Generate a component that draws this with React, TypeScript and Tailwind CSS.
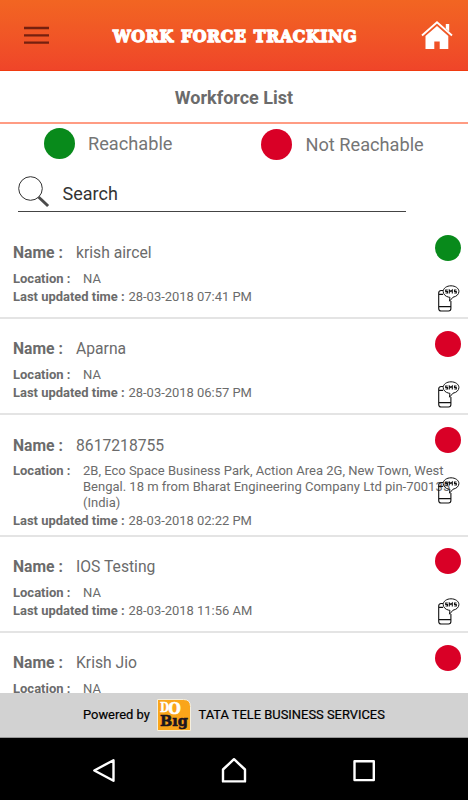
import React from 'react';

interface Worker {
    name: string;
    location: string[];
    updated: string;
    reachable: boolean;
}

const workers: Worker[] = [
    { name: 'krish aircel', location: ['NA'], updated: '28-03-2018 07:41 PM', reachable: true },
    { name: 'Aparna', location: ['NA'], updated: '28-03-2018 06:57 PM', reachable: false },
    {
        name: '8617218755',
        location: [
            '2B, Eco Space Business Park, Action Area 2G, New Town, West',
            'Bengal. 18 m from Bharat Engineering Company Ltd pin-700135',
            '(India)',
        ],
        updated: '28-03-2018 02:22 PM',
        reachable: false,
    },
    { name: 'IOS Testing', location: ['NA'], updated: '28-03-2018 11:56 AM', reachable: false },
    { name: 'Krish Jio', location: ['NA'], updated: '', reachable: false },
];

const MenuIcon: React.FC = () => (
    <svg width="25" height="19" viewBox="0 0 25 19" stroke="#75200f" strokeWidth="2.3">
        <path d="M0 2h25M0 9.3h25M0 16.6h25" />
    </svg>
);

const HomeIcon: React.FC = () => (
    <svg width="32" height="30" viewBox="0 0 32 30" fill="none">
        <path d="M1 15.5 16 2.2 31 15.5" stroke="#fff" strokeWidth="1.9" />
        <path d="M24.8 4h3.4v7.5l-3.4-3z" fill="#fff" />
        <path d="M16 6 27.3 16v13h-8.6v-7.5h-5.4V29H4.5V16z" fill="#fff" />
    </svg>
);

const SearchIcon: React.FC = () => (
    <svg width="32" height="32" viewBox="0 0 32 32" fill="none">
        <circle cx="12.5" cy="12.5" r="11.8" stroke="#333" strokeWidth="1" />
        <path d="m20.5 21 9.6 9" stroke="#4a4a4a" strokeWidth="3" />
    </svg>
);

const SmsIcon: React.FC = () => (
    <svg width="22" height="27" viewBox="0 0 22 27" fill="none" stroke="#111">
        <path d="M5 5.5H3.2Q.7 5.7.7 8v15.2Q.7 26 3.2 26h7.3q2.4 0 2.4-2.5V16" strokeWidth="1.1" />
        <path d="M1 9.4h4M1 21.6h12" strokeWidth="1.1" />
        <path
            d="M10.8 12.2C7.5 11.5 5.2 9.3 5.2 6.5 5.2 3.2 8.7.8 13 .8s7.9 2.4 7.9 5.7c0 2.9-2.5 5.1-5.9 5.7l-3.5 4 .4-3.9z"
            strokeWidth="1"
        />
        <path
            d="M9.7 5H7.7v1.5h1.8V8H7.5M11.3 8.4V5l1.5 1.4L14.3 5v3.4M18.5 5h-2v1.5h1.8V8h-2"
            strokeWidth="1.1"
        />
    </svg>
);

const DoBigLogo: React.FC = () => (
    <svg width="34" height="32" viewBox="0 0 34 32">
        <path d="M.5.5h26q7 0 7 7v24H.5z" fill="#faa51a" stroke="#f5efdf" />
        <text x="3" y="12.5" fontFamily="DejaVu Serif" fontWeight="bold" fontSize="12.5" fill="#fff" stroke="#fff" strokeWidth=".4" textLength="9" lengthAdjust="spacingAndGlyphs">D</text>
        <text x="11.3" y="15.3" fontFamily="DejaVu Serif" fontWeight="bold" fontSize="16" fill="#fff" stroke="#fff" strokeWidth=".7" textLength="12.5" lengthAdjust="spacingAndGlyphs">O</text>
        <text x="3" y="26.5" fontFamily="DejaVu Serif" fontWeight="bold" fontSize="15.5" fill="#1b1520" stroke="#1b1520" strokeWidth=".6" textLength="28" lengthAdjust="spacingAndGlyphs">Bıg</text>
    </svg>
);

const WorkerRow: React.FC<{ worker: Worker }> = ({ worker }) => (
    <li className="relative min-h-[96.2px] border-b-2 border-[#e4e4e4] pt-[18px] pb-[6.2px] pl-[13px] text-[#6b6b6b]">
        <div className="flex h-6 items-center text-[15.7px] whitespace-nowrap">
            <span className="w-[63px] font-bold">Name :</span>
            <span>{worker.name}</span>
        </div>
        <div className="flex pt-[6px] text-[13px] leading-[15.6px] whitespace-nowrap">
            <span className="w-[70px] shrink-0 font-bold">Location :</span>
            <div>
                {worker.location.map((line) => (
                    <div key={line}>{line}</div>
                ))}
            </div>
        </div>
        {worker.updated && (
            <div className="flex h-[18.4px] items-end pt-[2px] text-[12.95px] leading-[16px] whitespace-nowrap">
                <span className="w-[115.5px] font-bold">Last updated time :</span>
                <span>{worker.updated}</span>
            </div>
        )}
        <span
            className={`absolute top-[11.7px] right-[7px] h-[26px] w-[26px] rounded-full ${
                worker.reachable ? 'bg-[#088a1b]' : 'bg-[#d90026]'
            }`}
        />
        <span className="absolute top-[61.7px] right-[8px]">
            <SmsIcon />
        </span>
    </li>
);

const App: React.FC = () => {
    return (
        <div className="flex h-[800px] w-[468px] flex-col overflow-hidden bg-white font-['Roboto',sans-serif]">
            <header className="flex h-[71px] shrink-0 items-center justify-between border-b border-[#f03a10] bg-linear-to-b from-[#f26522] to-[#ef4529] pr-[15px] pl-6">
                <MenuIcon />
                <h1 className="w-[246px] pt-[2px] pl-px text-[17.5px] font-bold tracking-[0.65px] [word-spacing:1px] whitespace-nowrap text-white font-['DejaVu_Serif_Condensed','DejaVu_Serif',serif] [-webkit-text-stroke:1.3px_white]">
                    WORK FORCE TRACKING
                </h1>
                <HomeIcon />
            </header>
            <div className="flex h-[53px] shrink-0 items-center justify-center border-b-2 border-[#ff9c83] pt-[2px] text-lg font-bold text-[#6b6b6b]">
                Workforce List
            </div>

            <div className="flex h-[42px] shrink-0 items-center pl-11 text-[18.2px] whitespace-nowrap text-[#757575]">
                <span className="mr-[13px] mb-1 h-[31px] w-[31px] rounded-full bg-[#088a1b]" />
                <span className="mb-[2px] w-[173px]">Reachable</span>
                <span className="mr-[13.5px] mb-px h-[31px] w-[31px] rounded-full bg-[#d90026]" />
                <span>Not Reachable</span>
            </div>
            <div className="ml-[18px] flex h-[46px] w-[388px] shrink-0 items-end border-b border-[#444]">
                <div className="flex h-[35px] w-full">
                    <SearchIcon />
                    <span className="pt-1 pl-[12.5px] text-lg text-[#333]">Search</span>
                </div>
            </div>

            <ul className="min-h-0 flex-1 overflow-hidden pt-[11px]">
                {workers.map((worker) => (
                    <WorkerRow key={worker.name} worker={worker} />
                ))}
            </ul>

            <footer className="flex h-[45px] shrink-0 items-center border-b border-[#999] bg-[#d2d2d2] pl-[83px] text-[12.9px] whitespace-nowrap text-black [-webkit-text-stroke:0.2px_black]">
                <span className="w-[74px]">Powered by</span>
                <DoBigLogo />
                <span className="ml-[7.5px]">TATA TELE BUSINESS SERVICES</span>
            </footer>
            <nav className="flex h-[62px] shrink-0 items-center bg-black pt-[2px] pl-[92px]">
                <svg width="284" height="28" viewBox="0 0 284 28" fill="none" stroke="#fff" strokeWidth="2.4" strokeLinejoin="round">
                    <path d="M21.5 4.2v20.6L2.3 14.5z" />
                    <path d="M131 25.4V13.5l11-10.3 11 10.3v11.9z" />
                    <path d="M262.5 5.2h19.3v18.9h-19.3z" />
                </svg>
            </nav>
        </div>
    );
};

export default App;
